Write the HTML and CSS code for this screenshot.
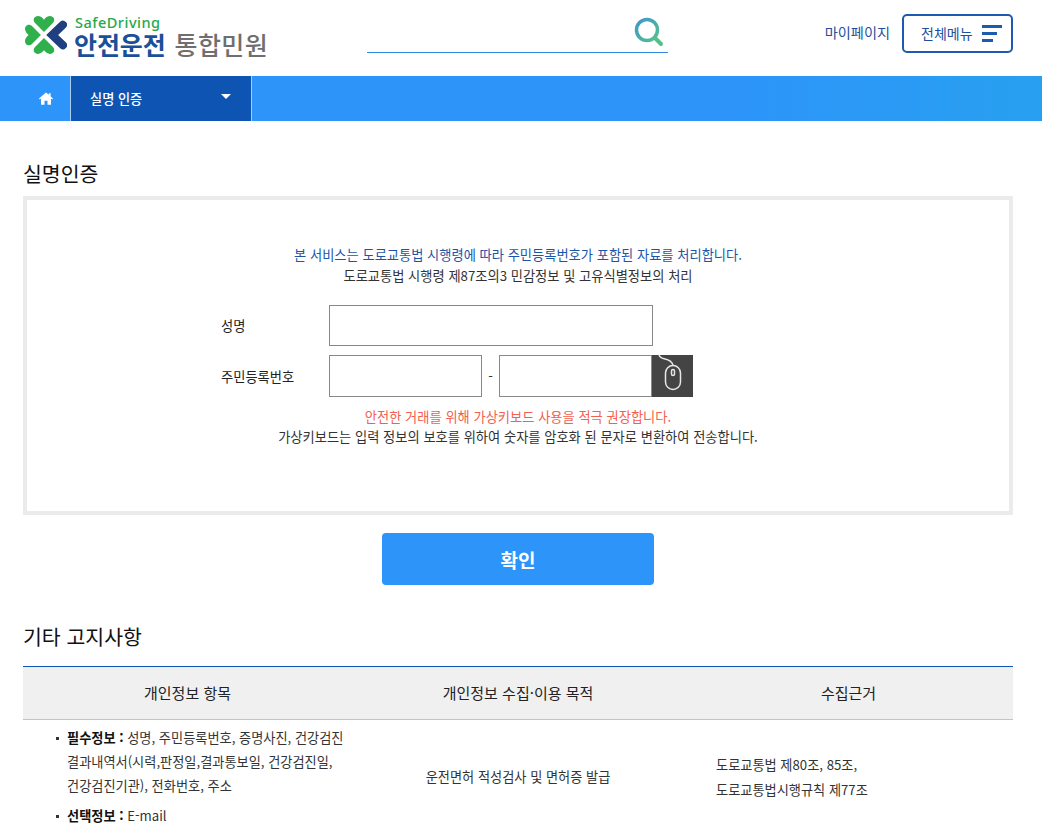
FILE: index.html
```html
<!DOCTYPE html>
<html lang="ko">
<head>
<meta charset="utf-8">
<title>실명 인증</title>
<link rel="stylesheet" href="styles.css">
</head>
<body>
<header class="header">
  <a class="logo">
    <svg class="logo-mark" viewBox="-20.500 -19.500 43 39" width="44" height="40">
      <g fill="#2fb04c">
        <path d="M0-3-8.500-11.500C-12-15-9-18.800-5.500-18.500-3-18.300-1-16.300 0-15 1-16.300 3-18.300 5.500-18.500 9-18.800 12-15 8.500-11.500Z"/>
        <path d="M0-3-8.500-11.500C-12-15-9-18.800-5.500-18.500-3-18.300-1-16.300 0-15 1-16.300 3-18.300 5.500-18.500 9-18.800 12-15 8.500-11.500Z" transform="rotate(180)"/>
        <path d="M0-3-8.500-11.500C-12-15-9-18.800-5.500-18.500-3-18.300-1-16.300 0-15 1-16.300 3-18.300 5.500-18.500 9-18.800 12-15 8.500-11.500Z" transform="rotate(-90)"/>
      </g>
      <path d="M18.500-10 8 0 18.500 10" fill="none" stroke="#1f3f80" stroke-width="8" stroke-linecap="round" stroke-linejoin="miter"/>
    </svg>
    <span class="logo-text">
      <span class="logo-en">SafeDriving</span>
      <span class="logo-ko"><b>안전운전</b> <em>통합민원</em></span>
    </span>
  </a>
  <div class="search">
    <svg class="search-icon" viewBox="0 0 30 30" width="30" height="30">
      <defs><linearGradient id="sg" x1="0" y1="0" x2="1" y2="1"><stop offset="0" stop-color="#3f97c9"/><stop offset="1" stop-color="#55c08c"/></linearGradient></defs>
      <circle cx="13" cy="13" r="10.500" fill="none" stroke="url(#sg)" stroke-width="3.500"/>
      <path d="M21 21l6 6" stroke="#55c08c" stroke-width="4" stroke-linecap="round"/>
    </svg>
  </div>
  <div class="util">
    <a class="mypage">마이페이지</a>
    <button class="all-menu">전체메뉴
      <span class="bars"><i class="b1"></i><i class="b2"></i><i class="b3"></i></span>
    </button>
  </div>
</header>

<nav class="nav">
  <a class="home">
    <svg viewBox="0 0 16 14" width="14" height="13"><path fill="#fff" d="M8 0 0 7l.9 1L2.300 6.900V14h4V9.500h3.400V14h4V6.900L15.100 8l.9-1-2.700-2.400V1h-2v1.800Z"/></svg>
  </a>
  <div class="crumb"><span>실명 인증</span><i class="caret"></i></div>
</nav>

<main class="main">
  <h2 class="title">실명인증</h2>
  <section class="box">
    <p class="notice-blue">본 서비스는 도로교통법 시행령에 따라 주민등록번호가 포함된 자료를 처리합니다.</p>
    <p class="notice">도로교통법 시행령 제87조의3 민감정보 및 고유식별정보의 처리</p>
    <form class="form">
      <div class="row">
        <label class="label">성명</label>
        <input class="field field-name" type="text">
      </div>
      <div class="row">
        <label class="label">주민등록번호</label>
        <input class="field field-id" type="text">
        <span class="dash">-</span>
        <input class="field field-id" type="text">
        <span class="mouse">
          <svg viewBox="0 0 41 42" width="41" height="42" fill="none" stroke="#e6e6e6" stroke-width="1.500">
            <path d="M7 0c1 3 3.500 3.500 6 4 3.500.7 6.500 1.500 8 6"/>
            <rect x="13.500" y="10.500" width="15" height="24" rx="7.500"/>
            <rect x="19.500" y="14.500" width="3" height="6" rx="1.500"/>
          </svg>
        </span>
      </div>
    </form>
    <p class="notice-red">안전한 거래를 위해 가상키보드 사용을 적극 권장합니다.</p>
    <p class="notice notice-last">가상키보드는 입력 정보의 보호를 위하여 숫자를 암호화 된 문자로 변환하여 전송합니다.</p>
  </section>
  <div class="actions"><button class="confirm">확인</button></div>
  <h2 class="title title-etc">기타 고지사항</h2>
  <table class="table">
    <colgroup><col class="c1"><col class="c2"><col class="c3"></colgroup>
    <thead>
      <tr><th>개인정보 항목</th><th>개인정보 수집·이용 목적</th><th>수집근거</th></tr>
    </thead>
    <tbody>
      <tr>
        <td class="items">
          <ul>
            <li><b>필수정보 :</b> 성명, 주민등록번호, 증명사진, 건강검진 결과내역서(시력,판정일,결과통보일, 건강검진일, 건강검진기관), 전화번호, 주소</li>
            <li><b>선택정보 :</b> E-mail</li>
          </ul>
        </td>
        <td class="purpose">운전면허 적성검사 및 면허증 발급</td>
        <td class="basis">도로교통법 제80조, 85조,<br>도로교통법시행규칙 제77조</td>
      </tr>
    </tbody>
  </table>
</main>
</body>
</html>
```
FILE: styles.css
```css
* { box-sizing: border-box; }
html, body { margin: 0; padding: 0; height: 832px; overflow: hidden; }
body { font-family: "Noto Sans CJK KR", "Noto Sans", sans-serif; font-size: 13.3px; color: #222; background: #fff; }
p { margin: 0; }

.header { height: 76px; padding: 0 29px 0 23px; display: flex; align-items: flex-start; }
.logo { width: 344px; display: flex; align-items: flex-start; padding-top: 15px; }
.logo-mark { display: block; flex: none; }
.logo-text { display: flex; flex-direction: column; margin-left: 7px; }
.logo-en { font-family: "Noto Sans", sans-serif; font-size: 14.500px; line-height: 15px; font-weight: 500; color: #27a84a; letter-spacing: .5px; padding-left: 1px; }
.logo-ko { font-size: 25px; line-height: 29px; white-space: nowrap; letter-spacing: -.1px; margin-top: 0; }
.logo-ko b { color: #1b4f97; font-weight: 700; }
.logo-ko em { color: #6f6f6f; font-style: normal; font-weight: 500; margin-left: 2px; letter-spacing: .4px; }

.search { width: 301px; height: 53px; border-bottom: 1px solid #2f8ae0; display: flex; justify-content: flex-end; padding: 17px 4px 0 0; }
.search-icon { display: block; }

.util { margin-left: auto; display: flex; align-items: flex-start; gap: 12px; padding-top: 14px; }
.mypage { font-size: 14.200px; line-height: 20px; margin-top: 8px; color: #1c4f9c; }
.all-menu { width: 111px; height: 39px; border: 2px solid #1c5bb0; border-radius: 5px; background: #fff; color: #1c4f9c; font: inherit; font-size: 14px; line-height: 20px; display: flex; align-items: center; padding: 0 0 2px 17px; gap: 9px; }
.bars { display: flex; flex-direction: column; gap: 4px; margin-top: 2px; }
.bars i { display: block; height: 3px; background: #1c5bb0; }
.b1 { width: 20px; }
.b2 { width: 15px; }
.b3 { width: 11px; }

.nav { height: 45px; background: linear-gradient(90deg, #2d94fa 0%, #2d94fa 70%, #28a0f0 100%); display: flex; }
.home { width: 71px; border-right: 1px solid #a8cef5; padding-left: 22px; display: flex; align-items: center; justify-content: center; }
.crumb { width: 181px; background: #0e55b3; border-right: 1px solid #a8cef5; color: #fff; font-size: 13.200px; font-weight: 500; display: flex; align-items: center; justify-content: space-between; padding: 0 20px 0 19px; }
.caret { width: 0; height: 0; border-left: 5px solid transparent; border-right: 5px solid transparent; border-top: 5px solid #fff; margin-bottom: 4px; }

.main { padding: 0 29px 0 23px; }
.title { margin: 0; font-size: 20.500px; font-weight: 400; line-height: 30px; color: #111; padding-top: 37px; height: 75px; }
.box { height: 319px; border: 4px solid #ebebeb; padding-top: 44px; text-align: center; }
.box p { font-size: 13.250px; line-height: 21px; }
.box .notice-red, .box .notice-last { line-height: 20px; }
.notice-blue { color: #1c55a8; }
.notice { color: #333; }
.notice-red { color: #f4604f; }
.form { padding: 18px 0 10px 194px; text-align: left; }
.row { display: flex; align-items: center; margin-bottom: 9px; height: 42px; }
.row:last-child { margin-bottom: 0; }
.label { width: 108px; font-size: 13.250px; color: #222; flex: none; }
.field { height: 41px; border: 1px solid #888; background: #fff; padding: 0; margin: 0; display: block; }
.field-name { width: 324px; }
.field-id { width: 153px; height: 42px; }
.dash { width: 17px; text-align: center; font-size: 13.3px; color: #333; }
.mouse { width: 41px; height: 42px; background: #444; display: block; }
.mouse svg { display: block; }

.actions { display: flex; justify-content: center; padding-top: 18px; }
.confirm { width: 272px; height: 52px; border: 0; border-radius: 4px; background: #2d94fa; color: #fff; font: inherit; font-size: 19px; font-weight: 700; }

.title-etc { padding-top: 36px; height: 81px; }

.table { width: 100%; border-collapse: collapse; table-layout: fixed; border-top: 1px solid #0e55b3; }
.c1 { width: 329px; }
.c2 { width: 332px; }
.table th { height: 53px; background: #f0f0f0; border-bottom: 1px solid #c4c4c4; font-size: 15px; font-weight: 400; color: #222; padding: 0 0 2px; }
.table td { padding: 0; font-size: 13.200px; vertical-align: middle; color: #333; }
.items ul { margin: 0; padding: 6px 0 4px 44px; list-style: none; }
.items li { position: relative; line-height: 24px; margin-bottom: 6px; width: 282px; word-break: keep-all; }
.items li:last-child { margin-bottom: 0; }
.items li::before { content: ""; position: absolute; left: -11px; top: 11px; width: 3px; height: 3px; background: #333; }
.items b { font-weight: 700; color: #111; }
.purpose { text-align: center; }
.table .basis { padding: 2px 0 0 32px; line-height: 25px; }
```
